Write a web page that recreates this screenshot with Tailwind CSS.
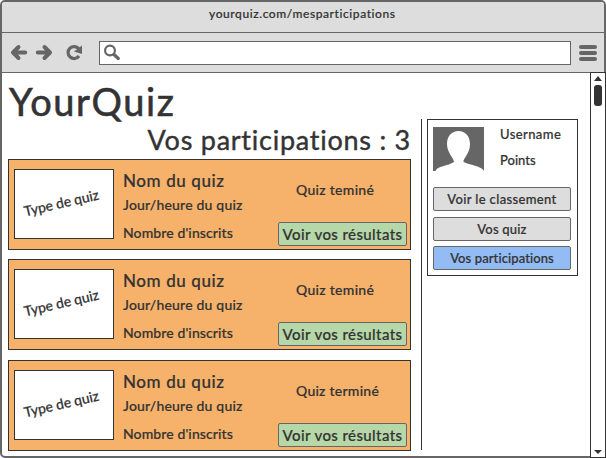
<!DOCTYPE html>
<html lang="fr">
<head>
<meta charset="utf-8">
<title>YourQuiz</title>
<script src="https://cdn.jsdelivr.net/npm/@tailwindcss/browser@4"></script>
</head>
<body class="w-[606px] h-[458px] overflow-hidden bg-white font-['Lato',sans-serif] font-medium text-[#333] whitespace-nowrap [-webkit-text-stroke:0.2px_#333]">
<div class="relative flex flex-col w-[606px] h-[458px] rounded-[5px] border-2 border-[#666] bg-white overflow-hidden">
  <header class="shrink-0 h-[31px] bg-[#ddd] border-b border-[#666] pl-[207px] pt-[3px] text-[12px] leading-[18px] tracking-[0.58px]">yourquiz.com/mesparticipations</header>
  <nav class="shrink-0 h-10 bg-[#ddd] border-b border-[#666] flex items-start pt-2 pl-2">
    <svg class="w-[89px] h-6 shrink-0" viewBox="10 41 89 24" fill="none" stroke="#666">
      <path d="M18.500 47L13 52.500L18.500 58M13.500 52.500H25.200M44.500 47L50 52.500L44.500 58M49.500 52.500H37.800" stroke-width="4" stroke-linecap="round" stroke-linejoin="round"/>
      <path d="M78.800 48.800A6 6 0 1 0 79 56" stroke-width="3.200"/>
      <path d="M82 45.500V54L74 51.500Z" fill="#666" stroke="none"/>
    </svg>
    <div class="w-[472px] h-6 bg-white border border-[#666]">
      <svg class="w-[24px] h-[22px]" viewBox="100 42 24 22" fill="none" stroke="#666"><circle cx="110" cy="50.500" r="4.900" stroke-width="2.200"/><path d="M114 54.500L118.300 58.500" stroke-width="3.300" stroke-linecap="round"/></svg>
    </div>
    <div class="ml-2 mt-1 flex flex-col gap-[2px]">
      <i class="block w-[18px] h-1 rounded-[2px] bg-[#666]"></i>
      <i class="block w-[18px] h-1 rounded-[2px] bg-[#666]"></i>
      <i class="block w-[18px] h-1 rounded-[2px] bg-[#666]"></i>
    </div>
  </nav>
  <div class="flex pl-[6px]">
    <main class="w-[403px] shrink-0">
      <h1 class="h-[46px] pt-[3px] pl-px text-[38px] leading-[50px] tracking-[1.6px] font-normal [-webkit-text-stroke:0.6px_#333]">YourQuiz</h1>
      <h2 class="h-10 text-right text-[27px] leading-[41px] tracking-[0.75px] font-normal [-webkit-text-stroke:0.4px_#333]">Vos participations : 3</h2>
      <div class="flex flex-col">
        <article class="mb-[9px] flex h-[91px] bg-[#f6b26b] border border-[#333] pl-[5px]">
          <div class="mt-[9px] w-[100px] h-[70px] shrink-0 bg-white border border-[#333] flex items-center justify-center"><span class="-rotate-13 -translate-x-[3px] -translate-y-[2px] text-[14px] tracking-[-0.1px]">Type de quiz</span></div>
          <div class="ml-[9px] w-[155px] shrink-0 pt-[9px]">
            <h3 class="h-6 text-[17px] leading-6 tracking-[0.6px]">Nom du quiz</h3>
            <p class="h-6 text-[14px] leading-6 tracking-[0.2px]">Jour/heure du quiz</p>
            <p class="pt-[4px] text-[14px] leading-6 tracking-[0.1px]">Nombre d'inscrits</p>
          </div>
          <div class="w-[129px]">
            <p class="h-[62px] pl-[18px] pt-[18px] text-[14px] leading-6 tracking-[0.3px]">Quiz teminé</p>
            <button class="block w-[129px] h-6 rounded-[2px] border border-[#666] bg-[#b6d7a8] text-[15px] leading-[21px] tracking-[0.4px]">Voir vos résultats</button>
          </div>
        </article>
        <article class="mb-[10px] flex h-[91px] bg-[#f6b26b] border border-[#333] pl-[5px]">
          <div class="mt-[9px] w-[100px] h-[70px] shrink-0 bg-white border border-[#333] flex items-center justify-center"><span class="-rotate-13 -translate-x-[3px] -translate-y-[2px] text-[14px] tracking-[-0.1px]">Type de quiz</span></div>
          <div class="ml-[9px] w-[155px] shrink-0 pt-[9px]">
            <h3 class="h-6 text-[17px] leading-6 tracking-[0.6px]">Nom du quiz</h3>
            <p class="h-6 text-[14px] leading-6 tracking-[0.2px]">Jour/heure du quiz</p>
            <p class="pt-[4px] text-[14px] leading-6 tracking-[0.1px]">Nombre d'inscrits</p>
          </div>
          <div class="w-[129px]">
            <p class="h-[62px] pl-[18px] pt-[18px] text-[14px] leading-6 tracking-[0.3px]">Quiz teminé</p>
            <button class="block w-[129px] h-6 rounded-[2px] border border-[#666] bg-[#b6d7a8] text-[15px] leading-[21px] tracking-[0.4px]">Voir vos résultats</button>
          </div>
        </article>
        <article class="flex h-[91px] bg-[#f6b26b] border border-[#333] pl-[5px]">
          <div class="mt-[9px] w-[100px] h-[70px] shrink-0 bg-white border border-[#333] flex items-center justify-center"><span class="-rotate-13 -translate-x-[3px] -translate-y-[2px] text-[14px] tracking-[-0.1px]">Type de quiz</span></div>
          <div class="ml-[9px] w-[155px] shrink-0 pt-[9px]">
            <h3 class="h-6 text-[17px] leading-6 tracking-[0.6px]">Nom du quiz</h3>
            <p class="h-6 text-[14px] leading-6 tracking-[0.2px]">Jour/heure du quiz</p>
            <p class="pt-[4px] text-[14px] leading-6 tracking-[0.1px]">Nombre d'inscrits</p>
          </div>
          <div class="w-[129px]">
            <p class="h-[62px] pl-[18px] pt-[18px] text-[14px] leading-6 tracking-[0.25px]">Quiz terminé</p>
            <button class="block w-[129px] h-6 rounded-[2px] border border-[#666] bg-[#b6d7a8] text-[15px] leading-[21px] tracking-[0.4px]">Voir vos résultats</button>
          </div>
        </article>
      </div>
    </main>
    <div class="ml-[10px] mt-[46px] w-px h-[331px] bg-[#333]"></div>
    <aside class="ml-[5px] mt-[46px] w-[151px] h-[157px] border border-[#333] pl-[5px] pt-[7px] text-[13px]">
      <div class="flex h-[60px]">
        <svg class="w-[51px] h-11 shrink-0" viewBox="0 0 51 44"><path d="M0 0H51V44C49 39 36 38 30.500 35C30 31 37 27 37 17C37 9 32 4 25.500 4S14 9 14 17C14 26 21 31 21 35C15 39 4 39 2.500 44H0Z" fill="#666"/></svg>
        <div class="pl-4 -mt-px">
          <p class="h-[26px] leading-4 tracking-[0.4px]">Username</p>
          <p class="leading-4">Points</p>
        </div>
      </div>
      <button class="block w-[138px] h-6 rounded-[2px] border border-[#666] bg-[#ddd] leading-[21px] tracking-[0.35px]">Voir le classement</button>
      <button class="block mt-[6px] w-[138px] h-6 rounded-[2px] border border-[#666] bg-[#ddd] leading-[21px] tracking-[0.2px]">Vos quiz</button>
      <button class="block mt-[5px] w-[138px] h-6 rounded-[2px] border border-[#666] bg-[#93bbf4] leading-[21px] tracking-[0.1px]">Vos participations</button>
    </aside>
  </div>
</div>
<div class="absolute left-[590px] top-[72px] w-4 h-[386px] bg-white border border-[#333] flex flex-col items-center pt-[3px]">
  <svg class="w-2 h-[5px] shrink-0" viewBox="0 0 8 4" preserveAspectRatio="none"><path d="M0 4L4 0L8 4Z" fill="#333"/></svg>
  <div class="mt-1 w-2 h-[21px] shrink-0 rounded-[3px] bg-[#333]"></div>
  <svg class="w-2 h-1 shrink-0 mt-auto mb-[3px]" viewBox="0 0 8 4"><path d="M0 0L4 4L8 0Z" fill="#333"/></svg>
</div>
</body>
</html>
